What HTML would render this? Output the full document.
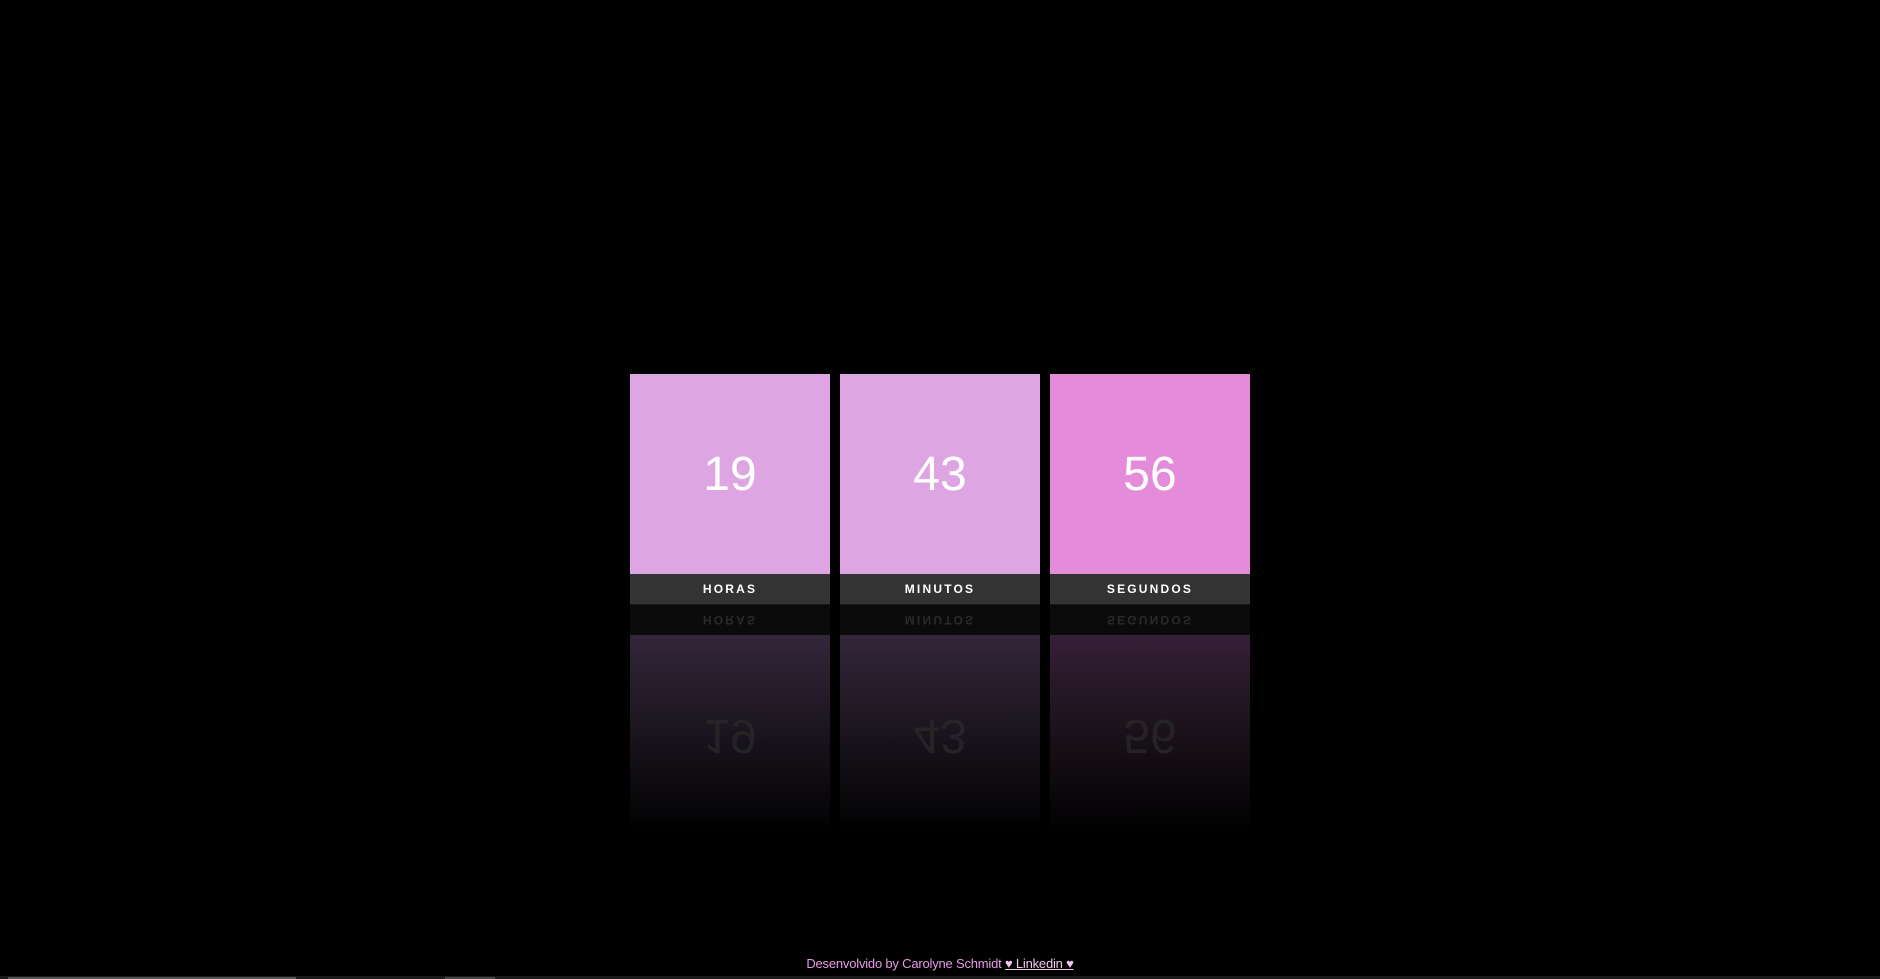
<!DOCTYPE html>
<html><head><meta charset="utf-8"><style>
html,body{margin:0;padding:0;background:#000;width:1880px;height:979px;overflow:hidden;font-family:"Liberation Sans",sans-serif}
.box{position:absolute;top:374px;width:200px}
.top{height:200px;display:flex;align-items:center;justify-content:center;color:#fff;font-size:48px;padding-top:0}
.lab{height:30px;background:#333;color:#fff;font-size:12px;font-weight:bold;letter-spacing:2.2px;display:flex;align-items:center;justify-content:center;border-bottom:1px solid #1a1a1a}
.rlab{height:30px;background:#0b0b0b;color:#2a2a2a;font-size:12px;font-weight:bold;letter-spacing:2.2px;display:flex;align-items:center;justify-content:center;transform:scaleY(-1)}
.rtop{height:200px;display:flex;align-items:center;justify-content:center;color:rgba(40,40,40,.8);font-size:48px}
.rtop span{transform:scaleY(-1)}
.foot{position:absolute;top:956px;width:100%;text-align:center;font-size:13px;color:#e69ae6;letter-spacing:-0.2px}
.foot a{color:#f3c8f0;text-decoration:underline}
</style></head><body>
<div class="box" style="left:630px">
<div class="top" style="background:#dda5e1">19</div><div class="lab">HORAS</div>
<div class="rlab">HORAS</div>
<div class="rtop" style="background:linear-gradient(#33263a,#1c1620 45%,#000)"><span>19</span></div></div>
<div class="box" style="left:840px">
<div class="top" style="background:#dda5e1">43</div><div class="lab">MINUTOS</div>
<div class="rlab">MINUTOS</div>
<div class="rtop" style="background:linear-gradient(#33263a,#1c1620 45%,#000)"><span>43</span></div></div>
<div class="box" style="left:1050px">
<div class="top" style="background:#e48cd9">56</div><div class="lab">SEGUNDOS</div>
<div class="rlab">SEGUNDOS</div>
<div class="rtop" style="background:linear-gradient(#361f38,#1c131c 45%,#000)"><span>56</span></div></div>
<div class="foot">Desenvolvido by Carolyne Schmidt <a>♥ Linkedin ♥</a></div>
<div style="position:absolute;left:0;top:976px;width:1880px;height:3px;background:#1a1a1a"></div>
<div style="position:absolute;left:8px;top:977px;width:288px;height:2px;background:#555"></div>
<div style="position:absolute;left:445px;top:977px;width:50px;height:2px;background:#444"></div>
</body></html>
